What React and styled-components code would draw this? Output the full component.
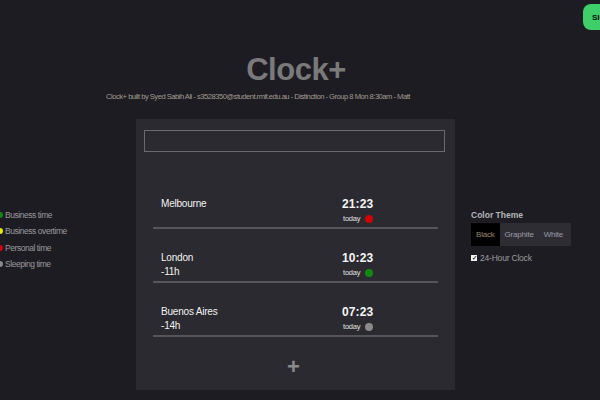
import React from "react";
import styled, { createGlobalStyle } from "styled-components";

const GlobalStyle = createGlobalStyle`
  html, body {
    margin: 0;
    padding: 0;
    background: #1d1c22;
    font-family: "Liberation Sans", Arial, sans-serif;
    overflow: hidden;
  }
`;

const cities = [
  { name: "Melbourne", offset: "", time: "21:23", status: "#d40000" },
  { name: "London", offset: "-11h", time: "10:23", status: "#0f8a0f" },
  { name: "Buenos Aires", offset: "-14h", time: "07:23", status: "#8a8a8a" },
];

const legend = [
  { label: "Business time", color: "#0f8a0f" },
  { label: "Business overtime", color: "#e6e600" },
  { label: "Personal time", color: "#d40000" },
  { label: "Sleeping time", color: "#8a8a8a" },
];

const App = () => {
  return (
    <React.Fragment>
      <GlobalStyle />
      <Page>
        <SignButton>SIGN IN</SignButton>
        <Header>
          <Title>Clock+</Title>
          <Subtitle>
            Clock+ built by Syed Sabih Ali - s3528350@student.rmit.edu.au -
            Distinction - Group 8 Mon 8:30am - Matt
          </Subtitle>
        </Header>

        <Main>
          <Legend>
            {legend.map((item) => (
              <LegendItem key={item.label}>
                <Dot $color={item.color} $size={6} />
                <span>{item.label}</span>
              </LegendItem>
            ))}
          </Legend>

          <Panel>
            <Search />
            <CityList>
              {cities.map((city) => (
                <CityRow key={city.name}>
                  <CityInfo>
                    <CityName>{city.name}</CityName>
                    <Offset>{city.offset}</Offset>
                  </CityInfo>
                  <TimeInfo>
                    <Time>{city.time}</Time>
                    <Day>
                      <span>today</span>
                      <Dot $color={city.status} $size={8} />
                    </Day>
                  </TimeInfo>
                </CityRow>
              ))}
            </CityList>
            <AddButton>+</AddButton>
          </Panel>

          <Settings>
            <SettingsTitle>Color Theme</SettingsTitle>
            <Segments>
              <Segment $active>Black</Segment>
              <Segment>Graphite</Segment>
              <Segment>White</Segment>
            </Segments>
            <CheckRow>
              <Check>✓</Check>
              <span>24-Hour Clock</span>
            </CheckRow>
          </Settings>
        </Main>
      </Page>
    </React.Fragment>
  );
};

export default App;

const Page = styled.div`
  position: relative;
  width: 600px;
  height: 400px;
  overflow: hidden;
`;

const SignButton = styled.div`
  position: absolute;
  top: 4px;
  left: 583px;
  height: 26px;
  padding: 0 9px;
  border-radius: 8px;
  background: #3ecf6a;
  color: #111;
  font-size: 8px;
  font-weight: 700;
  display: flex;
  align-items: center;
  white-space: nowrap;
`;

const Header = styled.div`
  padding-top: 54px;
  display: flex;
  flex-direction: column;
  align-items: center;
  padding-right: 8px;
`;

const Title = styled.h1`
  margin: 0;
  font-size: 31px;
  line-height: 32px;
  font-weight: 700;
  color: #7a7a7c;
  letter-spacing: -0.5px;
`;

const Subtitle = styled.p`
  margin: 5px 76px 0 0;
  font-size: 7.6px;
  line-height: 12px;
  color: #a39b90;
  letter-spacing: -0.5px;
  white-space: nowrap;
`;

const Main = styled.div`
  margin-top: 16px;
  display: grid;
  grid-template-columns: 136px 319px 1fr;
  align-items: start;
`;

const Legend = styled.div`
  margin-top: 90px;
  margin-left: -3px;
  display: flex;
  flex-direction: column;
  gap: 5px;
`;

const LegendItem = styled.div`
  display: flex;
  align-items: center;
  gap: 2px;
  height: 11.5px;
  font-size: 8.5px;
  color: #9a9a9c;
  letter-spacing: -0.45px;
`;

const Dot = styled.span`
  display: inline-block;
  width: ${(p) => p.$size}px;
  height: ${(p) => p.$size}px;
  border-radius: 50%;
  background: ${(p) => p.$color};
  flex-shrink: 0;
`;

const Panel = styled.div`
  background: #2b2a30;
  height: 271px;
  padding: 11px 10px 0 8px;
  box-sizing: border-box;
  display: flex;
  flex-direction: column;
`;

const Search = styled.div`
  height: 22px;
  box-sizing: border-box;
  border: 1px solid #6a696e;
  background: #2b2a30;
`;

const CityList = styled.div`
  margin: 23px 7px 0 9px;
  display: flex;
  flex-direction: column;
`;

const CityRow = styled.div`
  display: grid;
  grid-template-columns: 1fr 96px;
  padding: 23px 0 2px 8px;
  border-bottom: 2px solid #56555a;
`;

const CityInfo = styled.div`
  display: flex;
  flex-direction: column;
  color: #f2f2f2;
  font-size: 10px;
  letter-spacing: -0.2px;
`;

const CityName = styled.div`
  height: 14px;
  line-height: 12px;
`;

const Offset = styled.div`
  height: 13px;
  line-height: 12px;
`;

const TimeInfo = styled.div`
  display: flex;
  flex-direction: column;
`;

const Time = styled.div`
  height: 14px;
  line-height: 13px;
  font-size: 12px;
  font-weight: 700;
  color: #f5f5f5;
  letter-spacing: 0.1px;
`;

const Day = styled.div`
  display: flex;
  align-items: center;
  gap: 5px;
  height: 13px;
  padding-left: 1px;
  font-size: 7.5px;
  color: #e0e0e0;
  letter-spacing: -0.2px;
`;

const AddButton = styled.div`
  margin-top: 18px;
  text-align: center;
  font-size: 22px;
  line-height: 24px;
  font-weight: 700;
  color: #8a898e;
  padding-right: 2px;
`;

const Settings = styled.div`
  margin-top: 90px;
  padding-left: 16px;
  display: flex;
  flex-direction: column;
`;

const SettingsTitle = styled.div`
  font-size: 8.5px;
  font-weight: 700;
  color: #b5b5b8;
  height: 12px;
  line-height: 12px;
`;

const Segments = styled.div`
  margin-top: 2px;
  display: flex;
  width: 100px;
  height: 23px;
  background: #2e2d33;
`;

const Segment = styled.div`
  display: flex;
  align-items: center;
  padding: 0 5px;
  background: ${(p) => (p.$active ? "#000" : "transparent")};
  color: ${(p) => (p.$active ? "#9c8a6e" : "#9c9ca6")};
  font-size: 8px;
  letter-spacing: -0.2px;
`;

const CheckRow = styled.div`
  margin-top: 7px;
  display: flex;
  align-items: center;
  gap: 3px;
  font-size: 8.5px;
  color: #9c9c9e;
  letter-spacing: -0.2px;
`;

const Check = styled.span`
  width: 6px;
  height: 6px;
  background: #f4f4f4;
  color: #222;
  font-size: 6px;
  line-height: 6px;
  text-align: center;
  font-weight: 700;
`;
